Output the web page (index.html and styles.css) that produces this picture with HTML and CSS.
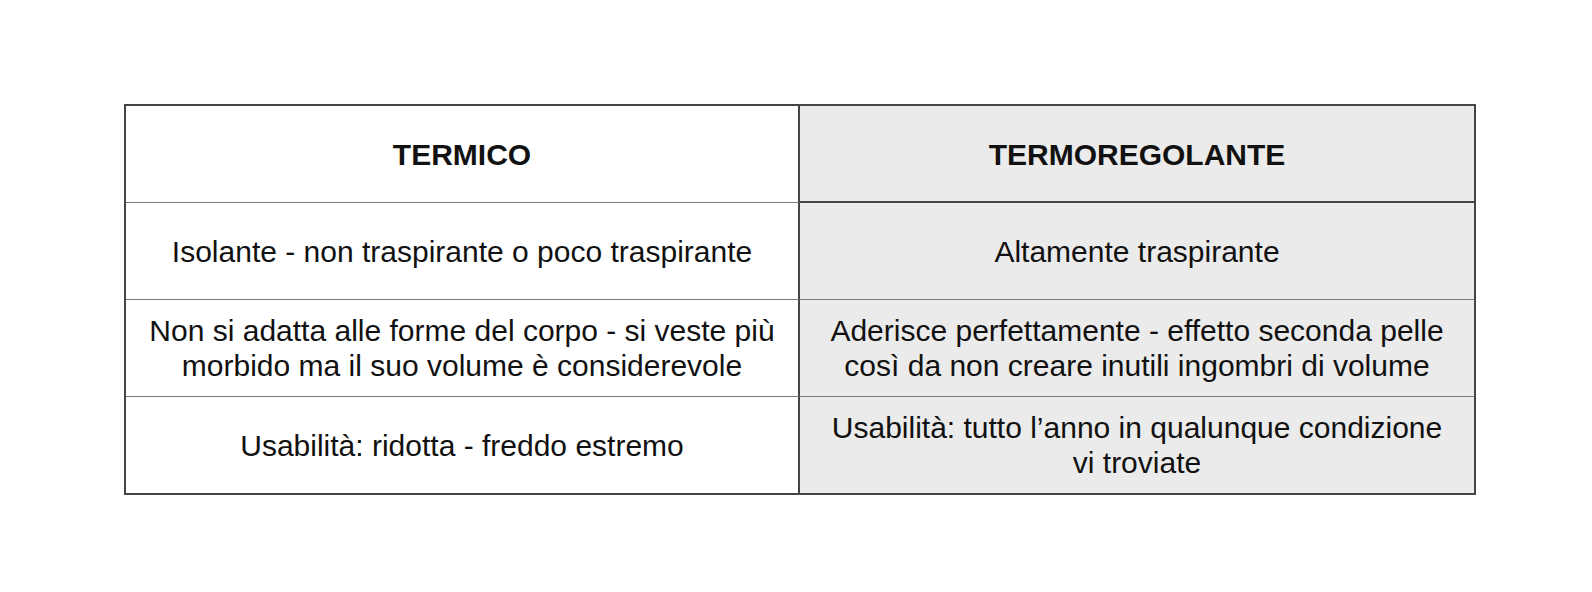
FILE: index.html
```html
<!DOCTYPE html>
<html lang="it">
<head>
<meta charset="utf-8">
<title>Termico vs Termoregolante</title>
<link rel="stylesheet" href="styles.css">
</head>
<body>
<div class="table">
  <div class="cell left head">TERMICO</div>
  <div class="cell right head">TERMOREGOLANTE</div>
  <div class="cell left">Isolante - non traspirante o poco traspirante</div>
  <div class="cell right">Altamente traspirante</div>
  <div class="cell left">Non si adatta alle forme del corpo - si veste più morbido ma il suo volume è considerevole</div>
  <div class="cell right">Aderisce perfettamente - effetto seconda pelle così da non creare inutili ingombri di volume</div>
  <div class="cell left last">Usabilità: ridotta - freddo estremo</div>
  <div class="cell right last">Usabilità: tutto l’anno in qualunque condizione vi troviate</div>
</div>
</body>
</html>
```

FILE: styles.css
```css
html, body {
  margin: 0;
  padding: 0;
  background: #ffffff;
}

body {
  padding: 104px 0 0 124px;
  font-family: "Liberation Sans", Arial, Helvetica, sans-serif;
  color: #111111;
}

.table {
  display: grid;
  grid-template-columns: 1fr 1fr;
  grid-template-rows: 97px 97px 97px 96px;
  width: 1352px;
  box-sizing: border-box;
  border: 2px solid #454545;
}

.cell {
  box-sizing: border-box;
  display: flex;
  align-items: center;
  justify-content: center;
  text-align: center;
  padding: 0 18px;
  font-size: 30px;
  line-height: 35px;
  border-bottom: 1px solid #7a7a7a;
}

.left {
  border-right: 2px solid #454545;
}

.right {
  background: #ebebeb;
}

.head {
  font-weight: bold;
}

.right.head {
  border-bottom: 2px solid #454545;
  padding-top: 1px;
}

.last {
  border-bottom: none;
}
```
